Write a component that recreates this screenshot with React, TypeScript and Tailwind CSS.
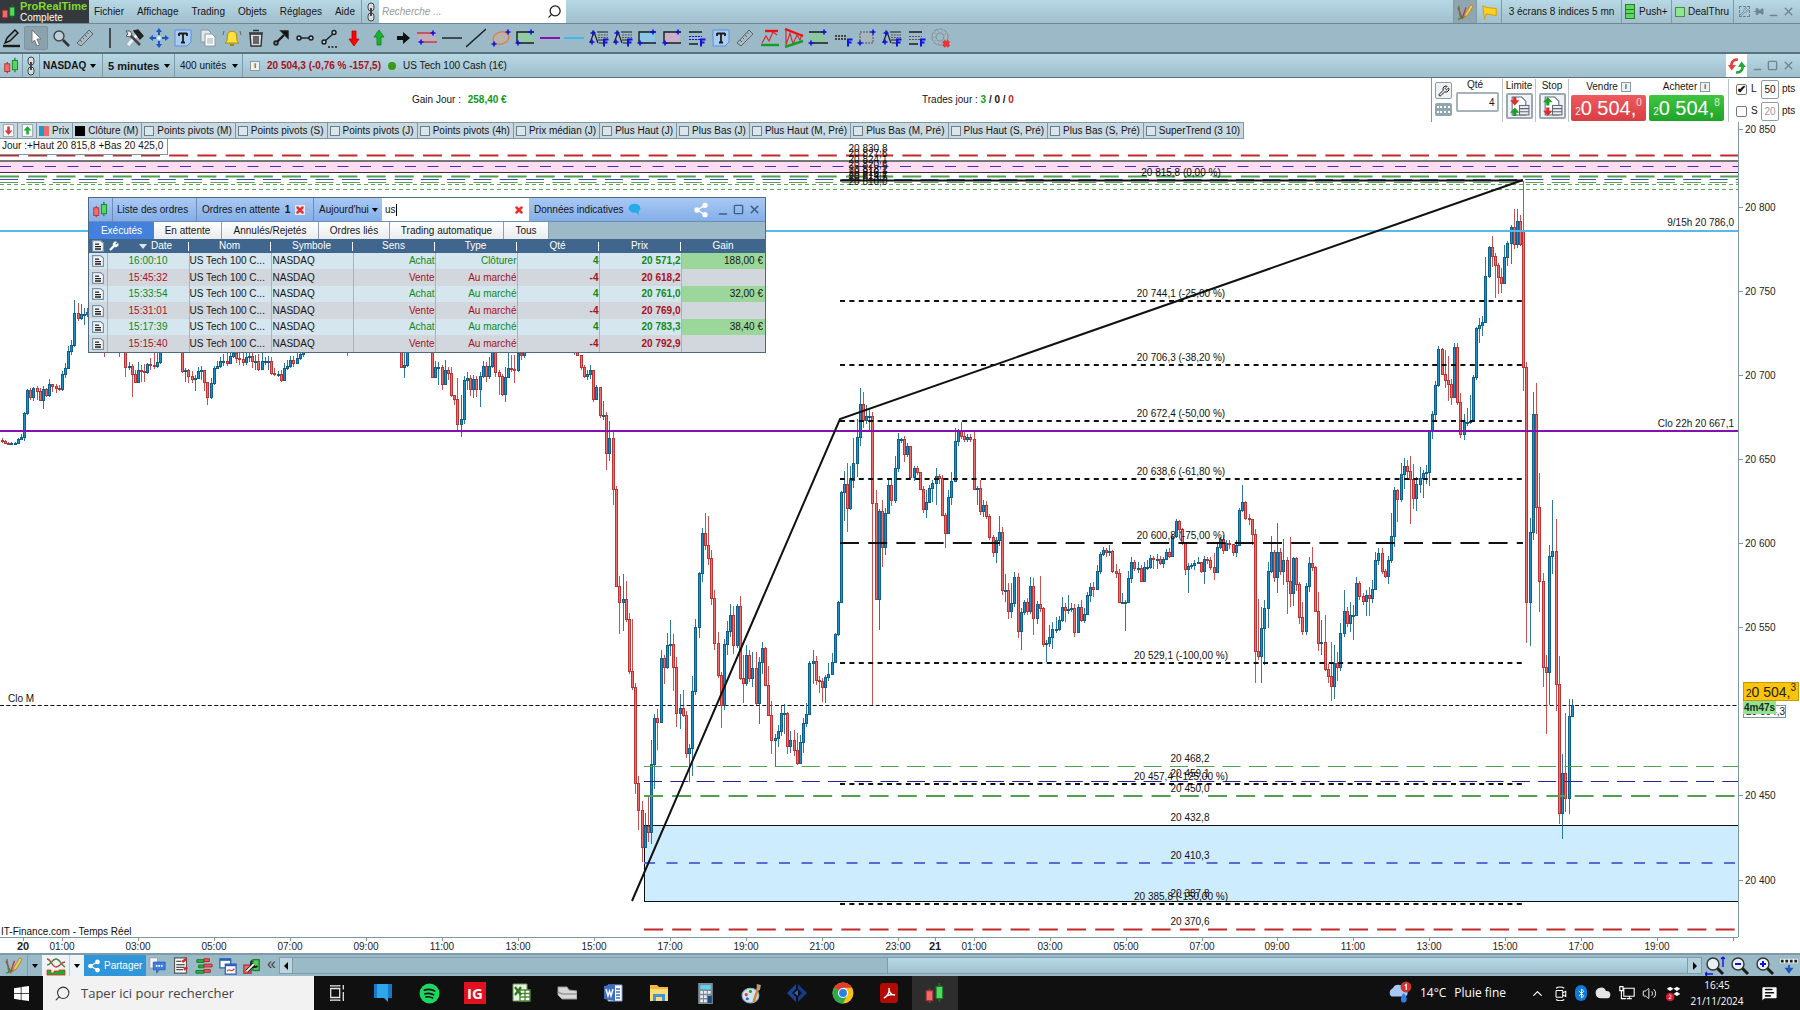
import React from "react";
import { Search, Share2, X, Minus, Square, ChevronUp, Bluetooth, Volume2, Cloud, MessageSquareText, Wrench, Pin } from "lucide-react";

/* ---------- price data: "close high low" per 5-minute bar, in chart units ---------- */

type Segment = { from: number; to: number; open: number; bars: string };

const SEGMENTS: Segment[] = [
  {
    from: 2, to: 87, open: 440,
    bars: "441 438 443;443 440 443;444 442 445;443 442 444;443 442 444;439 438 443;437 434 440;413 412 441;390 389 415;397 388 400;388 387 401;391 386 400;400 388 401;389 386 409;395 388 397;384 379 397;386 384 392;388 384 393;389 385 391;374 371 391;368 363 378;351 346 369;345 340 355;313 300 347;318 303 321;314 304 320;314 308 325;312 308 317",
  },
  {
    from: 91, to: 163, open: 312,
    bars: "322 315 326;325 318 330;330 320 335;335 325 340;345 330 357;344 335 348;338 330 345;340 335 345;345 335 350;350 340 357;346 340 350;367 340 377;366 362 370;374 364 397;382 370 383;370 362 383;371 365 382;372 364 382;364 363 374;365 358 370;366 352 369;362 350 368;350 345 364;340 335 350",
  },
  {
    from: 182, to: 303, open: 345,
    bars: "371 340 373;370 368 382;376 369 383;379 371 383;378 375 391;371 367 379;370 366 380;382 370 391;397 382 405;383 378 399;368 366 385;366 361 368;361 357 368;361 354 366;363 352 366;356 350 364;353 345 358;358 345 363;359 350 365;362 352 366;357 350 365;356 350 362;361 352 368;361 355 370;369 354 371;361 346 370;361 357 365;361 356 370;373 357 375;374 368 376;374 371 377;380 370 382;368 363 380;366 360 370;360 356 368;363 356 367;358 353 364;354 350 360;350 345 357",
  },
  { from: 347, to: 350, open: 340, bars: "342 330 356;335 330 345" },
  { from: 401, to: 407, open: 340, bars: "367 340 368;365 350 378;340 335 367" },
  {
    from: 432, to: 524, open: 335,
    bars: "377 335 378;367 361 377;367 362 385;384 365 390;370 360 385;373 367 380;395 367 397;399 395 405;424 378 430;419 395 437;380 376 424;378 372 390;389 375 396;379 375 398;389 376 397;376 372 407;366 361 378;376 362 382;366 357 379;352 345 368;372 345 377;376 370 395;394 374 396;377 367 402;368 350 378;369 355 372;370 355 383;353 345 372;355 350 360;347 340 358",
  },
  {
    from: 571, to: 609, open: 345,
    bars: "350 345 352;352 350 355;355 348 356;367 355 370;376 365 378;374 370 380;370 365 379;399 370 402;387 385 399;415 387 418;415 401 420;453 412 470;438 421 461",
  },
  {
    from: 613, to: 841, open: 438,
    bars: "489 432 505;586 486 587;602 576 634;599 574 631;619 581 622;671 613 674;687 619 690;783 683 794;810 776 830;847 801 862;826 813 847;832 795 842;764 740 844;718 714 789;722 709 750;658 650 723;667 655 684;645 633 669;644 620 656;667 634 691;713 657 727;708 694 729;715 690 717;753 711 758;748 744 782;691 676 776;627 619 695;573 572 638;533 528 582;545 513 550;558 516 565;598 550 605;643 590 650;675 632 678;705 672 728;644 639 710;631 621 655;615 604 637;645 606 654;606 604 648;678 596 680;683 655 703;655 645 686;678 650 682;668 652 687;703 652 705;662 657 724;648 642 674;685 647 686;715 666 716;740 701 754;738 734 767;731 725 747;713 706 736;713 704 734;746 712 754;740 731 753;750 730 756;763 733 765;742 735 762;723 718 753;714 703 727;663 661 715;661 650 684;680 656 685;681 676 693;687 678 702;677 675 703;674 663 681;662 653 675;634 633 662;602 601 636;492 491 602",
  },
  {
    from: 844, to: 1002, open: 492,
    bars: "484 471 521;508 463 532;480 466 510;463 438 488;437 419 477;404 388 446;420 392 428;416 405 424;416 410 430;503 412 705;599 490 600;511 509 630;547 500 567;513 508 555;485 478 513;500 478 506;468 456 503;439 433 472;439 438 443;454 436 462;446 443 457;477 446 478;468 466 481;472 466 475;489 472 490;509 486 513;502 490 518;488 485 503;483 480 502;476 468 505;478 474 484;515 475 516;533 513 548;497 490 533;481 472 505;441 428 482;431 429 446;436 422 439;439 430 442;437 434 442;439 434 442;489 430 490;488 486 505;511 480 515;505 500 517;516 501 519;537 514 540;552 535 557;540 537 563;532 516 546;590 527 595",
  },
  {
    from: 1005, to: 1185, open: 590,
    bars: "590 574 602;611 583 619;603 583 618;577 572 607;631 573 638;612 608 650;602 600 615;611 598 615;586 577 614;618 578 635;604 601 624;608 576 612;644 607 647;643 640 662;637 625 647;629 622 649;629 617 633;620 616 631;607 597 622;610 603 622;609 595 614;608 603 612;632 604 637;607 604 632;620 600 622;614 608 623;595 592 615;587 583 602;589 582 597;571 565 590;554 552 574;550 547 556;552 548 557;551 545 556;571 550 573;573 564 578;602 569 603;602 593 603;602 600 631;578 571 603;562 557 583;568 560 571;568 562 573;581 565 582;567 562 581;567 560 570;558 555 569;559 556 569;559 554 569;563 556 565;559 557 568;552 549 560;556 548 558;536 534 557;521 519 538;529 520 533;543 528 545;569 542 575",
  },
  {
    from: 1188, to: 1255, open: 569,
    bars: "566 563 593;565 563 569;563 560 570;562 557 564;571 562 573;559 556 584;560 557 564;567 557 570;572 553 580;547 544 573;539 537 549;550 535 554;543 540 550;544 540 549;552 545 556;545 540 557;510 508 546;502 485 512;518 501 520;519 514 525;534 519 545;651 529 683",
  },
  {
    from: 1258, to: 1426, open: 651,
    bars: "656 599 660;628 607 683;608 600 665;571 562 628;552 536 573;577 550 582;552 523 593;571 548 575;560 539 585;581 557 614;593 537 607;558 557 606;584 557 591;617 582 624;631 602 635;586 583 635;563 557 592;567 547 571;611 566 612;643 592 651;642 620 655;669 615 671;676 664 683;686 642 701;663 645 699;667 652 681;633 623 671;611 590 637;623 607 627;615 602 632;615 605 640;583 577 616;596 581 600;601 593 605;595 590 616;598 587 616;589 580 603;560 552 590;553 548 565;571 548 574;576 569 578;560 556 584;536 513 563;490 487 547;499 489 522;474 463 502;466 458 489;471 460 480;479 456 524;498 464 509;484 477 511;478 467 493;473 470 498;472 465 484",
  },
  {
    from: 1429, to: 1520, open: 472,
    bars: "430 430 486;414 411 439;385 381 421;349 346 387;374 348 375;380 350 388;384 356 401;397 379 405;347 343 398;402 343 405;434 393 438;422 414 440;422 408 426;421 395 424;377 375 422;328 327 380;325 318 343;322 316 336;276 257 323;247 246 278;256 236 267;265 253 298;277 263 294;283 268 293;257 245 283;243 241 266;227 225 264;244 209 249;221 209 248;244 215 246",
  },
  {
    from: 1523, to: 1572, open: 231,
    bars: "367 181 391;602 362 643;532 518 646;414 392 540;507 383 534;581 473 612;667 573 687;672 655 734;556 545 705;551 500 574;684 519 711;813 656 824;773 754 839;798 713 812;716 699 814;705 699 717",
  },
];

type Candle = { x: number; open: number; close: number; high: number; low: number };

const CANDLES: Candle[] = SEGMENTS.flatMap((s) => {
  const rows = s.bars.split(";").map((r) => r.split(" ").map(Number));
  let open = s.open;
  return rows.map(([close, high, low], i) => {
    const x = Math.round(s.from + ((s.to - s.from) * i) / (rows.length - 1)) + 0.5;
    const c = { x, open, close, high, low };
    open = close;
    return c;
  });
});

function Candles() {
  return (
    <g shapeRendering="crispEdges">
      {CANDLES.map((c, i) => {
        const up = c.close <= c.open;
        const edge = up ? "#0d608b" : "#bd3434";
        const top = Math.min(c.open, c.close);
        return (
          <g key={i}>
            <path d={`M${c.x} ${c.high}V${c.low}`} stroke={edge} strokeOpacity="0.85" />
            <rect x={c.x - 1} y={top + 0.5} width="2" height={Math.max(1, Math.abs(c.close - c.open))} fill={up ? "#1d8fc6" : "#ee6e6e"} stroke={edge} />
          </g>
        );
      })}
    </g>
  );
}

/* ---------- chart ---------- */

const FIB: [number, string, boolean?][] = [
  [301, "20 744,1 (-25,00 %)"],
  [365, "20 706,3 (-38,20 %)"],
  [421, "20 672,4 (-50,00 %)"],
  [479, "20 638,6 (-61,80 %)"],
  [543, "20 600,8 (-75,00 %)", true],
  [663, "20 529,1 (-100,00 %)"],
  [784, "20 457,4 (-125,00 %)"],
  [904, "20 385,8 (-150,00 %)"],
];

const TOP_LABELS: [number, string][] = [
  [152, "20 830,8"], [157, "20 827,6"], [163, "20 824,1"], [168, "20 820,6"], [173, "20 818,2"], [176, "20 816,1"], [179, "20 814,7"], [181, "20 813,5"], [185, "20 810,0"],
];

const LOW_LABELS: [number, string][] = [
  [762, "20 468,2"], [777, "20 459,1"], [792, "20 450,0"], [821, "20 432,8"], [859, "20 410,3"], [897, "20 387,8"], [925, "20 370,6"],
];

function Rule({ y, from = 0, color, w = 1, dash }: { y: number; from?: number; color: string; w?: number; dash?: string }) {
  return <line x1={from} x2="100%" y1={y} y2={y} stroke={color} strokeWidth={w} strokeDasharray={dash} />;
}

function PriceChart() {
  return (
    <svg className="block h-full w-full" role="img" aria-label="NASDAQ 5 minutes">
      <g transform="translate(0,-139)" fontSize="10" fill="#111">
        <rect x="0" y="161" width="100%" height="12" fill="#ffdcf1" />
        <Rule y={155.5} color="#c22a2a" w={2} dash="19 9.2" />
        <Rule y={161} color="#777" w={2} />
        <Rule y={166.5} color="#3930b8" dash="11 11.5" />
        <Rule y={172.5} color="#333" />
        <Rule y={176.5} color="#4fa04f" w={2} dash="19 9.2" />
        <Rule y={179.5} color="#3a48b8" dash="18 8.3" />
        <Rule y={182.5} color="#5aa55a" dash="18 8.3" />
        <Rule y={184.5} color="#5aa55a" dash="4 3" />
        <Rule y={189.5} color="#5aa55a" dash="4 3" />

        <rect x="644.5" y="825.5" width="100%" height="76" fill="#cdecfe" stroke="#111" />
        <Rule y={863} from={644} color="#5b6bd2" w={2} dash="11 11.5" />
        <Rule y={705.5} color="#111" dash="4 2.3" />
        <Rule y={929.5} from={644} color="#c22a2a" w={2} dash="19 9.2" />

        <Candles />

        <Rule y={231} color="#57b9ea" w={2} />
        <Rule y={431} color="#8410b4" w={2} />
        <Rule y={766.5} from={644} color="#4fa04f" dash="18 8.3" />
        <Rule y={781.5} from={644} color="#23239c" dash="18 8.3" />
        <Rule y={796} from={644} color="#4fa04f" w={2} dash="19 9.2" />

        {FIB.map(([y, label, long]) => (
          <g key={label}>
            <line x1="840" x2="1523" y1={y} y2={y} stroke="#111" strokeWidth="2" strokeDasharray={long ? "19 9.2" : "5 4.4"} />
            <text x="1181" y={y - 4} textAnchor="middle">{label}</text>
          </g>
        ))}
        <path d="M840 180.5H1523" stroke="#111" strokeWidth="2" />
        <path d="M632 901L840 419L1523 180" fill="none" stroke="#111" strokeWidth="2" />
        <text x="1181" y="176" textAnchor="middle">20 815,8 (0,00 %)</text>
        {TOP_LABELS.map(([y, t]) => <text key={t} x="868" y={y} textAnchor="middle">{t}</text>)}
        {LOW_LABELS.map(([y, t]) => <text key={t} x="1190" y={y} textAnchor="middle">{t}</text>)}
        <text x="8" y="702">Clo M</text>
        <text x="1" y="935">IT-Finance.com - Temps Réel</text>
      </g>
    </svg>
  );
}

const PRICE_TICKS: [number, string][] = [
  [7, "20 850"], [85, "20 800"], [169, "20 750"], [253, "20 700"], [337, "20 650"], [421, "20 600"], [505, "20 550"], [673, "20 450"], [758, "20 400"],
];

const TIME_TICKS: [number, string, boolean?][] = [
  [23, "20", true], [62, "01:00"], [138, "03:00"], [214, "05:00"], [290, "07:00"], [366, "09:00"], [442, "11:00"], [518, "13:00"], [594, "15:00"], [670, "17:00"], [746, "19:00"], [822, "21:00"], [898, "23:00"], [935, "21", true], [974, "01:00"], [1050, "03:00"], [1126, "05:00"], [1202, "07:00"], [1277, "09:00"], [1353, "11:00"], [1429, "13:00"], [1505, "15:00"], [1581, "17:00"], [1657, "19:00"], [1733, ""],
];

function PriceAxis() {
  return (
    <aside className="relative w-[62px] shrink-0 border-l border-[#7e98a3] bg-white">
      <svg className="block h-full w-full" aria-label="Prix">
        {PRICE_TICKS.map(([y, t]) => (
          <g key={t}>
            <path d={`M0 ${y + 0.5}h4`} stroke="#7e98a3" />
            <text x="6" y={y + 4} fontSize="10" fill="#222">{t}</text>
          </g>
        ))}
      </svg>
      <div className="absolute top-[583px] left-1 h-[13px] w-[43px] border border-[#7e98a3] bg-white text-right leading-3">20 504,3</div>
      <div className="absolute top-[579px] left-1 h-[13px] w-[33px] bg-[#95e295] text-center leading-[13px] font-bold text-[#163016]">4m47s</div>
      <div className="absolute top-[560px] left-1 flex h-[19px] w-14 items-center justify-center border border-[#c79a00] bg-[#fcc50c] text-[14px] leading-none text-[#222]">
        <span className="self-end pb-px text-[10px]">2</span>0 504,<span className="self-start text-[10px]">3</span>
      </div>
    </aside>
  );
}

/* ---------- icons ---------- */

function Ic({ children, size = 20 }: { children: React.ReactNode; size?: number }) {
  return (
    <svg width={size} height={size} viewBox="0 0 20 20" fill="none" stroke="#1c1c1c" strokeWidth="1.4" aria-hidden="true" className="shrink-0">
      {children}
    </svg>
  );
}

const CandleIcon = ({ size = 18 }: { size?: number }) => (
  <Ic size={size}>
    <path d="M5 6v13" stroke="#a33" /><rect x="2" y="8" width="6" height="9" fill="#f26a6a" stroke="#a33" strokeWidth="1" />
    <path d="M14 1v17" stroke="#187a25" /><rect x="11" y="4" width="6" height="11" fill="#52d95f" stroke="#187a25" strokeWidth="1" />
  </Ic>
);

const PencilZig = ({ size = 20 }: { size?: number }) => (
  <Ic size={size}>
    <path d="M2 5l5 12 4-12" stroke="#c33" /><path d="M3 3l2 14M2 18c4-1 8-1 11-6" stroke="#484" />
    <path d="M9 16l1.500-4 6-10 2.500 1.500-6 10z" fill="#f8cf52" stroke="#a07a20" strokeWidth="0.8" />
  </Ic>
);

const plus = (x: number, y: number) => <path d={`M${x - 2.5} ${y}h5M${x} ${y - 2.5}v5`} stroke="#1111e0" strokeWidth="1.6" />;
const fMark = <path d="M15 18.500v-7h4.500M15 14.500h3.500" stroke="#1111e0" strokeWidth="2" />;

const RulerIcon = (
  <Ic><path d="M2 15L14 2l4 4L6 18z" fill="#a9bac2" stroke="#55646c" strokeWidth="1" /><path d="M5 12l2 2M7.500 9.500l1.500 1.500M10 7l2 2M12 4.500l1.500 1.500" stroke="#55646c" strokeWidth="1" /></Ic>
);
const TextIcon = (
  <Ic><path d="M2 2h16v12l-4 4H2z" fill="#a9cdf0" stroke="#5b8fe0" strokeWidth="1" /><path d="M6 5.500h8M10 6v9M8 14.500h4M6 5v3M14 5v3" strokeWidth="1.800" /></Ic>
);
const AnalysisF = (
  <Ic><path d="M1 15L5 4l4 11M8 4h11M10 15h4M9 12h8" strokeWidth="1.200" /><path d="M9 7h10M9 9.500h10" stroke="#555" strokeWidth="1.200" strokeDasharray="2 0.800" />{plus(4, 5)}{plus(3, 14)}{fMark}</Ic>
);
const linesF = (mid: string) => (
  <Ic><path d="M3 4h13M3 16h9" /><path d="M3 8.500h13M3 11.500h11" stroke={mid} strokeDasharray="2 1" strokeWidth="1.200" />{fMark}</Ic>
);
const boxIcon = (fill: string, side: boolean) => (
  <Ic><path d="M2 4h16v11H2z" fill={fill} stroke="none" /><path d={side ? "M2 15V4h17M2 15h17" : "M1 4h17M3 15h17"} />{plus(16, 4)}{plus(3, 15)}</Ic>
);

const TOOLS: { name: string; icon: React.ReactNode; active?: boolean }[] = [
  { name: "Dessiner", icon: <Ic><path d="M3 15l2-5 8-8 3 3-8 8z" fill="#8fa6b0" stroke="#111" /><path d="M1 18h17" strokeWidth="2.4" /></Ic> },
  { name: "Curseur", active: true, icon: <Ic><path d="M6 2l9 9H11l2.500 6-2.500 1-2.500-6L6 15z" fill="#fff" stroke="#777" strokeWidth="1" /></Ic> },
  { name: "Zoom", icon: <Ic><circle cx="8" cy="8" r="5" fill="#bcd0d9" stroke="#444" /><path d="M12 12l6 6" strokeWidth="2.600" stroke="#333" /></Ic> },
  { name: "Mesure", icon: RulerIcon },
  { name: "Séparateur", icon: <Ic><path d="M10 0v20" /></Ic> },
  { name: "Outils", icon: <Ic><path d="M4 17L13 7" stroke="#eef2f4" strokeWidth="3" /><path d="M6 7l10 10" stroke="#444" strokeWidth="2.600" /><path d="M10 3l4-1 5 6-3 3z" fill="#222" stroke="#222" /><path d="M2 3l4 0 2 3-2 3-4-1 2-2z" fill="#eee" stroke="#555" strokeWidth="1" /></Ic> },
  { name: "Déplacer", icon: <Ic><path d="M10 3v14M3 10h14" stroke="#1b57c4" strokeWidth="2" strokeDasharray="4 1" /><path d="M10 0l3 4H7zM10 20l3-4H7zM0 10l4-3v6zM20 10l-4-3v6z" fill="#1b57c4" stroke="none" /><circle cx="10" cy="10" r="2" fill="#dff" stroke="none" /></Ic> },
  { name: "Texte", icon: TextIcon },
  { name: "Copier", icon: <Ic><path d="M3 2h7l3 3v9H3z" fill="#dfe7ea" stroke="#8b989e" strokeWidth="1" /><path d="M7 6h7l3 3v9H7z" fill="#fff" stroke="#8b989e" strokeWidth="1" /><path d="M9 11h6M9 13h6M9 15h6" stroke="#9aa" strokeWidth="1" /></Ic> },
  { name: "Alerte", icon: <Ic><path d="M3 15c3-2 2-5 2.500-8 .5-5 8.500-5 9 0 .5 3-.5 6 2.500 8z" fill="#ffe13a" stroke="#a88a00" strokeWidth="1" /><path d="M8 17h4" stroke="#a88a00" strokeWidth="2" /><path d="M2 3L1 7M18 3l1 4" stroke="#666" strokeWidth="1" /></Ic> },
  { name: "Supprimer", icon: <Ic><path d="M4 6h12l-1 12H5z" fill="#d7dde0" stroke="#333" /><path d="M3 5h14M7 2.500h6M8 8v8M10 8v8M12 8v8" stroke="#333" /></Ic> },
  { name: "Flèche", icon: <Ic><path d="M5 15l8-8" strokeWidth="2.400" /><path d="M10 3h7v7z" fill="#111" /><circle cx="5" cy="15" r="2" fill="#777" /></Ic> },
  { name: "Segment", icon: <Ic><path d="M5 10h10" /><circle cx="4" cy="10" r="2" fill="#b7cbd4" /><circle cx="16" cy="10" r="2" fill="#b7cbd4" /></Ic> },
  { name: "Segment prolongé", icon: <Ic><path d="M5 13l9-8" /><circle cx="4" cy="14" r="2" fill="#b7cbd4" /><circle cx="14" cy="4.500" r="2" fill="#b7cbd4" /><path d="M8 19h10" strokeDasharray="2 1.500" /></Ic> },
  { name: "Baisse", icon: <Ic><path d="M8 3h4v8h3l-5 7-5-7h3z" fill="#f00" stroke="#b00" strokeWidth="0.800" /></Ic> },
  { name: "Hausse", icon: <Ic><path d="M8 17h4V9h3l-5-7-5 7h3z" fill="#1db32a" stroke="#0c7d18" strokeWidth="0.800" /></Ic> },
  { name: "Droite", icon: <Ic><path d="M4 8h6V4l7 6-7 6v-4H4z" fill="#111" stroke="none" /></Ic> },
  { name: "Canal", icon: <Ic><path d="M1 5h17v9H1z" fill="#c3aebb" stroke="none" /><path d="M0 5h17M3 14h17" stroke="#c8383f" />{plus(16, 5)}{plus(4, 14)}</Ic> },
  { name: "Ligne horizontale", icon: <Ic><path d="M0 10h20" /></Ic> },
  { name: "Droite oblique", icon: <Ic><path d="M0 19L20 1" /></Ic> },
  { name: "Ellipse", icon: <Ic><ellipse cx="10" cy="10" rx="8" ry="6" stroke="#e07f4e" fill="#b9b3ac" transform="rotate(-20 10 10)" />{plus(17, 4)}{plus(3, 16)}</Ic> },
  { name: "Rectangle", icon: boxIcon("#92c9a6", true) },
  { name: "Ligne violette", icon: <Ic><path d="M0 10h20" stroke="#8410b4" strokeWidth="2" /></Ic> },
  { name: "Ligne bleue", icon: <Ic><path d="M0 10h20" stroke="#45b4ee" strokeWidth="2" /></Ic> },
  { name: "Analyse 1", icon: AnalysisF },
  { name: "Analyse 2", icon: AnalysisF },
  { name: "Zone bleue", icon: boxIcon("#8ec6e8", true) },
  { name: "Zone rose", icon: boxIcon("#cbb0cc", true) },
  { name: "Retracement", icon: linesF("#1111e0") },
  { name: "Note", icon: TextIcon },
  { name: "Règle", icon: RulerIcon },
  { name: "Zigzag", icon: <Ic><path d="M2 15l4-7 3 5 4-9 4 3" stroke="#c33" strokeWidth="1.200" /><path d="M5 3h13" stroke="#e11" strokeWidth="2.400" /><path d="M1 17h18" stroke="#13a022" strokeWidth="2.400" /></Ic> },
  { name: "Triangle", icon: <Ic><path d="M2 2v15l4-12 3 11 4-9 3 5 2-6" stroke="#c33" strokeWidth="1.200" /><path d="M1 1l18 7" stroke="#e11" strokeWidth="2.400" /><path d="M1 19l18-6" stroke="#13a022" strokeWidth="2.400" /></Ic> },
  { name: "Canal vert", icon: boxIcon("#8cc7a4", false) },
  { name: "Pointillés", icon: <Ic><path d="M2 8h12M2 11h12" strokeDasharray="2 1" strokeWidth="2" stroke="#444" />{fMark}</Ic> },
  { name: "Zone grise", icon: <Ic><rect x="3" y="4" width="13" height="11" fill="#a5b6be" stroke="#555" strokeDasharray="2 1" strokeWidth="1" />{plus(16, 4)}{plus(3, 15)}</Ic> },
  { name: "Analyse 3", icon: AnalysisF },
  { name: "Niveaux", icon: linesF("#555") },
  { name: "Aimant", icon: <Ic><circle cx="9" cy="9" r="6" stroke="#7c8d95" strokeWidth="5" strokeDasharray="3 0.800" /><circle cx="9" cy="9" r="6" stroke="#a9bbc3" strokeWidth="3" strokeDasharray="2.800 1" /><path d="M12.500 13l5.500 5.500M18 13l-5.500 5.500" stroke="#e33" strokeWidth="3.500" /></Ic> },
];

const Caret = () => <span className="inline-block border-x-[3px] border-t-4 border-x-transparent border-t-black" />;

const LinkIcon = () => (
  <svg width="12" height="20" viewBox="0 0 12 20" fill="none" stroke="#444" aria-hidden="true">
    <rect x="3" y="1" width="6" height="8" rx="3" fill="#d5dde0" /><rect x="3" y="11" width="6" height="8" rx="3" fill="#d5dde0" /><path d="M6 6v8" strokeWidth="2" />
  </svg>
);

const Info = () => <span className="flex size-[10px] items-center justify-center border border-[#8a9aa2] bg-[#eef2f4] text-[8px] leading-none font-bold text-[#555]">i</span>;

const RedCross = () => (
  <span className="flex size-[10px] items-center justify-center"><X size={10} strokeWidth={6} color="#e8322e" /></span>
);

/* ---------- bars ---------- */

function MenuBar() {
  return (
    <header className="flex h-6 shrink-0 items-stretch border-b border-[#6e8792] bg-linear-to-b from-[#b7d8e5] to-[#a1bfcc]">
      <div className="flex w-[89px] items-center gap-[3px] bg-[#33393c] pl-px">
        <CandleIcon size={16} />
        <div className="leading-[11px] whitespace-nowrap">
          <div className="text-[11px] font-bold text-[#7fdc2f]">ProRealTime</div>
          <div className="text-white">Complete</div>
        </div>
      </div>
      <nav className="flex w-[272px] items-center justify-between pr-[6px] pl-[5px]">
        {["Fichier", "Affichage", "Trading", "Objets", "Réglages", "Aide"].map((m) => <button key={m} type="button">{m}</button>)}
      </nav>
      <div className="flex w-[18px] items-center justify-center border-l border-[#7f9ba8]"><LinkIcon /></div>
      <label className="flex w-[187px] items-center bg-white pr-1 pl-[3px]">
        <input type="search" aria-label="Recherche" placeholder="Recherche ..." className="min-w-0 flex-1 italic outline-none placeholder:text-[#9a9a9a]" />
        <Search size={15} className="-scale-x-100" />
      </label>
      <div className="flex-1" />
      <button type="button" aria-label="Dessins" className="flex w-6 items-center justify-center border-x border-[#7f9ba8] bg-[#8fa6b1]"><PencilZig size={18} /></button>
      <button type="button" aria-label="Drapeau" className="flex w-6 items-center justify-center"><Ic size={18}><path d="M3 3l4 2 11 1v8l-11-2-2 6z" fill="#ffd11f" stroke="#d69a00" strokeWidth="1" /></Ic></button>
      <button type="button" className="w-[120px] border-l border-[#7f9ba8] text-center">3 écrans 8 indices 5 mn</button>
      <button type="button" className="flex w-[50px] items-center gap-1 border-l border-[#7f9ba8] pl-[3px]">
        <span className="flex h-[15px] w-[10px] flex-col divide-y divide-[#2c7a32] border border-[#2c7a32] bg-[#5ad860]"><i className="flex-1" /><i className="flex-1" /><i className="flex-1" /></span>Push+
      </button>
      <button type="button" className="flex w-[62px] items-center gap-[3px] border-l border-[#7f9ba8] pl-[3px]"><span className="size-[10px] border border-[#4a8a50] bg-[#8fe890]" />DealThru</button>
      <div className="flex w-[67px] items-center justify-between border-l border-[#7f9ba8] px-[5px] text-[#70848e]">
        <span className="border border-dashed border-[#70848e]"><Wrench size={9} /></span><Pin size={11} className="rotate-90" fill="#70848e" /><Minus size={11} strokeWidth={3} className="mt-2" /><X size={13} strokeWidth={2.5} />
      </div>
    </header>
  );
}

function DrawingBar() {
  return (
    <div className="flex h-[30px] shrink-0 items-center border-b-2 border-[#5c737d] bg-[#9bb9c6]">
      <div className="flex w-[953px] items-center justify-between">
        {TOOLS.map((t) => (
          <button key={t.name} type="button" aria-label={t.name} className={t.active ? "flex h-6 w-6 items-center justify-center rounded-xs border border-[#7e939d] bg-[#8aa2ad]" : "flex h-6 w-6 items-center justify-center"}>
            {t.icon}
          </button>
        ))}
      </div>
    </div>
  );
}

function InstrumentBar() {
  return (
    <div className="flex h-6 shrink-0 items-stretch border-b border-[#5c737d] bg-linear-to-b from-[#b7d8e5] to-[#a1bfcc]">
      <span className="flex w-[22px] items-center justify-center"><CandleIcon size={17} /></span>
      <span className="flex w-[18px] items-center justify-center border-x border-[#7f9ba8]"><LinkIcon /></span>
      <button type="button" className="flex w-[63px] items-center justify-between border-r border-[#7f9ba8] pr-[6px] pl-[3px] font-bold">NASDAQ<Caret /></button>
      <button type="button" className="flex w-[72px] items-center justify-between border-r border-[#7f9ba8] pr-[4px] pl-[5px] text-[11px] font-bold">5 minutes<Caret /></button>
      <button type="button" className="flex w-[68px] items-center justify-between border-r border-[#7f9ba8] pr-[4px] pl-[5px]">400 unités<Caret /></button>
      <div className="flex items-center gap-[7px] pl-[7px]">
        <Info />
        <span className="font-bold text-[#a80f1b]">20 504,3 (-0,76 % -157,5)</span>
        <span className="size-2 rounded-full bg-[#3a9a12]" />
        <span>US Tech 100 Cash (1€)</span>
      </div>
      <div className="flex-1" />
      <span className="flex w-[21px] items-center justify-center bg-white">
        <Ic size={18}><path d="M11 3C6 2 3 6 4 11" stroke="#e0443f" strokeWidth="3" /><path d="M0 9h9l-5 6z" fill="#e0443f" stroke="none" /><path d="M9 17c5 1 8-3 7-8" stroke="#22a83a" strokeWidth="3" /><path d="M11 11h9l-5-6z" fill="#22a83a" stroke="none" /></Ic>
      </span>
      <div className="flex w-[53px] items-center justify-between px-[5px] text-[#70848e]">
        <Minus size={11} strokeWidth={3} className="mt-2" /><Square size={11} strokeWidth={3} /><X size={13} strokeWidth={2.5} />
      </div>
    </div>
  );
}

function QuoteButton({ label, tone, last }: { label: string; tone: "sell" | "buy"; last: string }) {
  return (
    <div className="flex w-[75px] flex-col items-stretch">
      <div className="flex h-4 items-center justify-center gap-[3px]">{label}<Info /></div>
      <button type="button" aria-label={label} className={tone === "sell" ? "flex h-[26px] items-center justify-center rounded-xs bg-linear-to-b from-[#ee5a5e] to-[#d93d43] text-[20px] leading-none text-white" : "flex h-[26px] items-center justify-center rounded-xs bg-linear-to-b from-[#3fc43f] to-[#1fa42a] text-[20px] leading-none text-white"}>
        <span className="self-end pb-1 text-[10px] opacity-90">2</span>0 504,<span className="self-start pt-[3px] text-[10px] opacity-80">{last}</span>
      </button>
    </div>
  );
}

const DOWN = "M4 0h3v3h3L5.500 8 1 3h3z";
const UP = "M4 8h3V5h3L5.500 0 1 5h3z";

function OrderType({ label, stop }: { label: string; stop?: boolean }) {
  return (
    <div className="flex w-[33px] flex-col items-center border-l border-[#b9c4ca]">
      <span className="h-[14px] leading-[13px]">{label}</span>
      <button type="button" aria-label={label} className="flex h-[26px] w-[27px] items-center justify-center rounded-xs border-2 border-[#9aa8b0] bg-[#f1f4f6]">
        <Ic size={21}>
          <path d="M3 1h9l4 4v13H3z" fill="#fff" stroke="#667" strokeWidth="1" />
          <path d={stop ? UP : DOWN} fill={stop ? "#16a02a" : "#e02c2c"} stroke="none" transform="translate(0,1)" />
          <path d={stop ? DOWN : UP} fill={stop ? "#e02c2c" : "#16a02a"} stroke="none" transform="translate(0,11)" />
          <rect x="10" y="9" width="9" height="9" fill="#e8edf0" stroke="#667" strokeWidth="1" /><path d="M10 12h9M10 15h9" stroke="#667" strokeWidth="1" />
        </Ic>
      </button>
    </div>
  );
}

function LevelRow({ label, value, on }: { label: string; value: string; on?: boolean }) {
  return (
    <div className="flex h-[20px] items-center">
      <label className="flex w-[25px] items-center gap-1">
        <input type="checkbox" defaultChecked={on} className="peer sr-only" />
        <span className="flex size-[11px] items-center justify-center rounded-xs border border-[#777] bg-white text-[11px] leading-none font-bold">{on ? "✔" : ""}</span>
        {label}
      </label>
      <input aria-label={`Points ${label}`} defaultValue={value} className={on ? "h-[19px] w-[18px] rounded-xs border border-[#8f9ba2] text-center outline-none" : "h-[19px] w-[18px] rounded-xs border border-[#8f9ba2] text-center text-[#9b9b9b] outline-none"} />
      <span className="pl-[3px]">pts</span>
    </div>
  );
}

function TradingPanel() {
  return (
    <section className="flex h-11 shrink-0 bg-white">
      <div className="flex flex-1 items-center">
        <div className="w-[510px] pl-[412px] whitespace-nowrap">Gain Jour : <b className="pl-1 text-[#109a1c]">258,40 €</b></div>
        <div className="pl-[412px] whitespace-nowrap">Trades jour : <b><span className="text-[#109a1c]">3</span> / 0 / <span className="text-[#c3202a]">0</span></b></div>
      </div>
      <div className="flex w-[369px] shrink-0 border-l border-[#7e98a3] pt-px">
        <div className="flex w-[20px] flex-col items-end gap-1 pt-[3px]">
          <button type="button" aria-label="Réglages" className="flex size-[17px] items-center justify-center rounded-xs border border-[#8f9ba2] bg-[#eef2f4]"><Wrench size={12} /></button>
          <button type="button" aria-label="Clavier" className="flex h-[13px] w-[17px] items-center justify-center rounded-xs bg-[#8fa5b0]"><span className="h-[7px] w-[13px] border-y-2 border-dotted border-white" /></button>
        </div>
        <label className="flex w-[50px] flex-col items-center">
          <span className="h-[13px] pr-1 leading-3">Qté</span>
          <input defaultValue="4" className="h-5 w-[43px] rounded-xs border-2 border-[#a7b2b9] px-[2px] text-right outline-none" />
        </label>
        <OrderType label="Limite" />
        <OrderType label="Stop" stop />
        <div className="flex gap-[3px] border-l border-[#b9c4ca] pl-[2px]">
          <QuoteButton label="Vendre" tone="sell" last="0" />
          <QuoteButton label="Acheter" tone="buy" last="8" />
        </div>
        <div className="ml-1 flex flex-col gap-[2px] border-l border-[#b9c4ca] pl-[7px]">
          <LevelRow label="L" value="50" on />
          <LevelRow label="S" value="20" />
        </div>
      </div>
    </section>
  );
}

const OVERLAYS = ["Points pivots (M)", "Points pivots (S)", "Points pivots (J)", "Points pivots (4h)", "Prix médian (J)", "Plus Haut (J)", "Plus Bas (J)", "Plus Haut (M, Pré)", "Plus Bas (M, Pré)", "Plus Haut (S, Pré)", "Plus Bas (S, Pré)", "SuperTrend (3 10)"];

function Indicators() {
  const cell = "flex h-[17px] items-center gap-[3px] border-y border-r border-[#7f97a2] bg-[#c9d9e1] pr-[3px] pl-[2px] whitespace-nowrap";
  return (
    <div className="flex h-[17px] shrink-0">
      <button type="button" aria-label="Réduire" className="flex h-[17px] w-[18px] items-center justify-center border-y border-r border-[#7f97a2] bg-[#c9d9e1]"><Ic size={13}><rect x="2" y="1" width="16" height="18" fill="#fff" stroke="#99a" /><path d="M8 4h4v6h4l-6 7-6-7h4z" fill="#e23a3a" stroke="none" /></Ic></button>
      <button type="button" aria-label="Agrandir" className="flex h-[17px] w-[19px] items-center justify-center border-y border-r border-[#7f97a2] bg-[#c9d9e1]"><Ic size={13}><rect x="2" y="1" width="16" height="18" fill="#fff" stroke="#99a" /><path d="M8 16h4v-6h4l-6-7-6 7h4z" fill="#1eae35" stroke="none" /></Ic></button>
      <button type="button" className={cell}><span className="size-[10px] border-r-[5px] border-l-[5px] border-r-[#f06a6a] border-l-[#1d9ac6]" />Prix</button>
      <button type="button" className={cell}><span className="size-[10px] bg-black" />Clôture (M)</button>
      {OVERLAYS.map((o) => <button key={o} type="button" className={cell}><span className="size-[10px] border border-[#6f7f88] bg-[#dbe6ec]" />{o}</button>)}
    </div>
  );
}

/* ---------- order list window ---------- */

const ORDERS: [string, boolean, string, string, string][] = [
  ["16:00:10", true, "Clôturer", "20 571,2", "188,00 €"],
  ["15:45:32", false, "Au marché", "20 618,2", ""],
  ["15:33:54", true, "Au marché", "20 761,0", "32,00 €"],
  ["15:31:01", false, "Au marché", "20 769,0", ""],
  ["15:17:39", true, "Au marché", "20 783,3", "38,40 €"],
  ["15:15:40", false, "Au marché", "20 792,9", ""],
];

const TABS: [string, string][] = [
  ["Exécutés", "w-[65px]"], ["En attente", "w-[68px]"], ["Annulés/Rejetés", "w-[97px]"], ["Ordres liés", "w-[71px]"], ["Trading automatique", "w-[114px]"], ["Tous", "w-[45px]"],
];

const DocIcon = ({ size = 12 }: { size?: number }) => (
  <Ic size={size}><path d="M1 1h13l5 4v14H1z" fill="#f4f7fa" stroke="#7a93ac" strokeWidth="2" /><path d="M5 7h7M5 11h10M5 15h10" strokeWidth="2.200" /></Ic>
);

function OrderList() {
  const divider = "border-r border-[#a3b6c0]";
  return (
    <section className="absolute top-[58px] left-[88px] w-[678px] border border-[#4d6a80] bg-[#9bb9c6]">
      <div className="flex h-6 items-stretch border-b border-[#6d8db5] bg-linear-to-b from-[#a9c9f3] to-[#83aee8]">
        <span className="flex w-[24px] items-center justify-center border-r border-[#6d8db5]"><CandleIcon size={17} /></span>
        <span className="flex w-[84px] items-center border-r border-[#6d8db5] pl-1">Liste des ordres</span>
        <span className="flex w-[117px] items-center gap-[5px] border-r border-[#6d8db5] pl-[5px] whitespace-nowrap">Ordres en attente <b>1</b><span className="bg-[#dfe9f6]"><RedCross /></span></span>
        <button type="button" className="flex w-[68px] items-center gap-[3px] pl-[5px] whitespace-nowrap">Aujourd'hui<Caret /></button>
        <label className="relative flex w-[147px] items-center bg-white pr-[5px] pl-[3px]">
          <input aria-label="Filtrer les ordres" defaultValue="us" className="min-w-0 flex-1 outline-none" />
          <span className="absolute left-[14px] h-3 w-px bg-black" />
          <RedCross />
        </label>
        <span className="flex flex-1 items-center gap-1 pl-[5px]">Données indicatives
          <Ic size={13}><ellipse cx="10" cy="8" rx="9" ry="7" fill="#27aaea" stroke="none" /><path d="M11 12l5 7 1-8z" fill="#27aaea" stroke="none" /></Ic>
        </span>
        <span className="flex items-center gap-1 pr-[4px] text-[#3f5f8c]">
          <Share2 size={16} color="#fff" fill="#fff" className="mr-1" /><Minus size={12} strokeWidth={3} className="mt-2" /><Square size={11} strokeWidth={3} /><X size={13} strokeWidth={3} />
        </span>
      </div>
      <div role="tablist" className="flex h-[17px]">
        {TABS.map(([t, w], i) => (
          <button key={t} type="button" role="tab" aria-selected={i === 0} className={`${w} ${i === 0 ? "bg-[#4381dc] text-white" : "border-r border-[#8ba0ac] bg-linear-to-b from-white to-[#e9ebed]"} text-center whitespace-nowrap`}>{t}</button>
        ))}
      </div>
      <table className="w-full table-fixed border-collapse">
        <colgroup>
          <col className="w-[18px]" /><col className="w-[82px]" /><col className="w-[82px]" /><col className="w-[82px]" /><col className="w-[82px]" /><col className="w-[82px]" /><col className="w-[82px]" /><col className="w-[82px]" /><col />
        </colgroup>
        <thead>
          <tr className="h-[14px] bg-[#41668d] text-white">
            <th aria-label="Détail" className="p-0"><div className="flex justify-center"><DocIcon size={12} /></div></th>
            {["Date", "Nom", "Symbole", "Sens", "Type", "Qté", "Prix", "Gain"].map((h, i) => (
              <th key={h} className="p-0 font-normal">
                <div className={i < 7 ? "flex h-[9px] items-center border-r border-white" : "flex h-[9px] items-center"}>
                  {i === 0 && <Wrench size={10} className="absolute ml-[2px]" fill="#fff" />}
                  <span className={i === 0 ? "flex flex-1 items-center justify-center gap-1 pl-4" : "flex-1"}>
                    {i === 0 && <span className="border-x-4 border-t-[5px] border-x-transparent border-t-[#dbe6f0]" />}{h}
                  </span>
                </div>
              </th>
            ))}
          </tr>
        </thead>
        <tbody>
          {ORDERS.map(([time, buy, type, price, gain], i) => {
            const tone = buy ? "text-[#0f8a1c]" : "text-[#a9101c]";
            return (
              <tr key={time} className={`${i % 2 ? "h-[17px]" : "h-4"} ${buy ? "bg-[#d5e6ee]" : "bg-[#d1d7dd]"}`}>
                <td className={`p-0 ${divider}`}><div className="flex justify-center"><DocIcon /></div></td>
                <td className={`p-0 text-center ${divider} ${tone}`}>{time}</td>
                <td className={`p-0 whitespace-nowrap ${divider}`}>US Tech 100 C...</td>
                <td className={`p-0 pl-px ${divider}`}>NASDAQ</td>
                <td className={`p-0 text-right ${divider} ${tone}`}>{buy ? "Achat" : "Vente"}</td>
                <td className={`p-0 text-right ${divider} ${tone}`}>{type}</td>
                <td className={`p-0 text-right font-bold ${divider} ${tone}`}>{buy ? "4" : "-4"}</td>
                <td className={`p-0 text-right font-bold ${divider} ${tone}`}>{price}</td>
                <td className={gain ? "bg-[#9bd79b] p-0 pr-[2px] text-right" : "p-0"}>{gain}</td>
              </tr>
            );
          })}
        </tbody>
      </table>
    </section>
  );
}

/* ---------- bottom bars ---------- */

const Glass = ({ sign }: { sign?: "+" | "-" }) => (
  <Ic size={20}>
    <circle cx="8" cy="8" r="6" fill="#e8f0f4" stroke="#333" /><path d="M12.500 12.500L18 18" strokeWidth="3" />
    {sign ? <path d={sign === "+" ? "M5 8h6M8 5v6" : "M5 8h6"} stroke="#1111d0" strokeWidth="2" /> : <path d="M0 18h8M18 1v10M0 18l2-2M0 18l2 2M18 1l-2 2M18 1l2 2" stroke="#1111e0" />}
  </Ic>
);

function ScrollRow() {
  return (
    <div className="flex h-[23px] shrink-0 items-stretch border-t-2 border-[#7f9ba8] bg-[#9bbac8]">
      <button type="button" aria-label="Dessin" className="flex w-7 items-center justify-center border-r border-[#7f9ba8]"><PencilZig size={19} /></button>
      <button type="button" aria-label="Choisir un dessin" className="flex w-[14px] items-center justify-center"><Caret /></button>
      <button type="button" aria-label="Indicateurs" className="flex w-[27px] items-center justify-center bg-[#eef3f5]"><Ic><path d="M1 3c4 0 5 8 9 8s5-5 9-5" stroke="#c33" /><path d="M1 9c4 0 5-6 9-6s5 6 9 8" stroke="#484" /><path d="M1 19v-5h4v3h3v-2h5v-1h6v5z" fill="#14b32a" stroke="#e22" strokeWidth="0.800" /></Ic></button>
      <button type="button" aria-label="Choisir un indicateur" className="flex w-[15px] items-center justify-center border-l border-[#c2cdd3] bg-[#eef3f5]"><Caret /></button>
      <button type="button" className="flex w-[62px] items-center gap-[3px] bg-[#2f96da] pl-[3px] text-white"><Share2 size={14} fill="#fff" />Partager</button>
      <div className="flex w-[118px] items-center justify-around">
        <Ic size={17}><path d="M1 1h9v12H1z" fill="#f3f6f8" stroke="#99a" strokeWidth="1" /><path d="M5 6h14v9h-7l-3 4v-4H5z" fill="#3f7be0" stroke="#2a5cb8" strokeWidth="1" /><path d="M8 10.500h8" stroke="#fff" strokeDasharray="2 1" strokeWidth="2" /></Ic>
        <Ic size={17}><path d="M3 1h14v18H3z" fill="#fff" stroke="#555" /><path d="M5 5h6M5 9h10M5 12h10M5 15h8" strokeWidth="1.200" /><path d="M12 6l5-4M14 15l4-3" stroke="#e22" strokeWidth="3" /></Ic>
        <Ic size={18}><path d="M2 3h8v3H2zM4 9h6v3H4zM1 15h9v3H1z" fill="#26b83a" stroke="#15701f" strokeWidth="1" /><path d="M10 2h6v3h-6zM10 8h9v3h-9zM10 14h7v3h-7z" fill="#f05a5a" stroke="#a22" strokeWidth="1" /></Ic>
        <Ic size={18}><path d="M1 2h12v10H1z" fill="#fff" stroke="#2b5fb5" /><path d="M1 3h12" stroke="#2b5fb5" strokeWidth="2.500" /><path d="M7 8h12v11H7z" fill="#fff" stroke="#2b5fb5" /><path d="M7 9h12" stroke="#2b5fb5" strokeWidth="2.500" /><path d="M9 16c3-5 4 3 8-3" stroke="#e33" /></Ic>
        <Ic size={18}><rect x="1" y="9" width="8" height="9" fill="#f26a6a" stroke="#a33" /><rect x="11" y="3" width="7" height="12" fill="#4ecb5a" stroke="#187a25" /><path d="M4 16l8-8" strokeWidth="4" /><path d="M10 4a4 4 0 006 6" strokeWidth="2" /><path d="M4 16l8-8" stroke="#fff" strokeWidth="2" /></Ic>
      </div>
      <span className="flex w-[15px] items-center justify-center pb-1 text-[16px] leading-none text-[#444]">«</span>
      <div className="my-[2px] flex flex-1 border border-[#7f9ba8]">
        <button type="button" aria-label="Défiler à gauche" className="flex w-[13px] items-center justify-center border-r border-[#7f9ba8] bg-[#bcd5df]"><span className="border-y-4 border-r-4 border-y-transparent border-r-black" /></button>
        <div className="flex-[594]" />
        <div className="flex-[799] border-x border-[#7f9ba8] bg-linear-to-b from-[#b9dbe8] to-[#9fc0ce]" />
        <button type="button" aria-label="Défiler à droite" className="flex w-[13px] items-center justify-center bg-[#b3cfda]"><span className="border-y-4 border-l-4 border-y-transparent border-l-black" /></button>
      </div>
      <div className="flex w-[98px] items-center justify-around">
        <Glass /><Glass sign="-" /><Glass sign="+" />
        <Ic size={18}><path d="M0 2h20v5H0z" fill="#e7edf0" stroke="none" /><path d="M1 4.500h18" strokeDasharray="3 2" strokeWidth="3" /><path d="M10 9v6M7 13l3 4 3-4z" stroke="#1c55c0" fill="#1c55c0" strokeWidth="2" /></Ic>
      </div>
    </div>
  );
}

const APPS: { name: string; icon: React.ReactNode; active?: boolean }[] = [
  { name: "Vue des tâches", icon: <Ic size={18}><path d="M3 5h10v10H3zM3 1v1h10V1M3 19v-1h10v1M17 9v10M17 1v5" stroke="#e8e8e8" /></Ic> },
  { name: "Bureau", icon: <Ic><path d="M1 1h18v14H1z" fill="#1878c8" stroke="none" /><path d="M4 1h11v18l-4-4H4z" fill="#2ea6ec" stroke="none" /></Ic> },
  { name: "Spotify", icon: <Ic size={21}><circle cx="10" cy="10" r="9.500" fill="#1ed760" stroke="none" /><path d="M4.500 7c4-1.500 8-1 11 1M5 10.500c3-1 7-.7 9.500 1M6 13.500c2.500-.7 5-.5 7.500 1" stroke="#111" strokeWidth="1.600" /></Ic> },
  { name: "IG", icon: <span className="flex h-[22px] w-[22px] items-center justify-center bg-[#e3101f] text-[15px] leading-none font-bold text-white">IG</span> },
  { name: "Excel", icon: <Ic><path d="M2 1h14v17H2z" fill="#e9f3e4" stroke="#6a9a52" strokeWidth="1" /><path d="M9 7h10v11H9z" fill="#fff" stroke="#4d8a34" /><path d="M9 10.500h10M9 14h10M14 7v11" stroke="#4d8a34" /><path d="M4 4l6 8M10 4l-6 8" stroke="#2f7a1f" strokeWidth="2.200" /></Ic> },
  { name: "Scanner", icon: <Ic><path d="M1 4h9l2 3 8 1v8H5l-4-4z" fill="#d8d8d8" stroke="#999" strokeWidth="1" /><path d="M1 9l4 2h15" stroke="#999" /></Ic> },
  { name: "Word", icon: <Ic><path d="M5 2h14v16H5z" fill="#fff" stroke="#7fa0d0" strokeWidth="1" /><path d="M1 3l11-2v17L1 16z" fill="#3d6fc0" stroke="none" /><path d="M3 6l2 7 1.500-5L8 13l2-7" stroke="#fff" /><path d="M13 6h4M13 9h4M13 12h4M13 15h4" stroke="#3d6fc0" /></Ic> },
  { name: "Explorateur", icon: <Ic><path d="M1 2h7l2 2h9v14H1z" fill="#f0b93a" stroke="none" /><path d="M1 6h18v12H1z" fill="#fddb78" stroke="none" /><path d="M4 18v-7h12v7h-3v-4H7v4z" fill="#3f97d8" stroke="none" /></Ic> },
  { name: "Calculatrice", icon: <Ic size={21}><path d="M3 0h14v20H3z" fill="#7d8c96" stroke="none" /><path d="M5 2h10v4H5z" fill="#5fd4f0" stroke="none" /><path d="M5 9h10M5 13h10M5 17h10" stroke="#e8eef2" strokeWidth="2.600" strokeDasharray="2.600 1" /><path d="M12 12h4v7h-4z" fill="#1d4a80" stroke="none" /></Ic> },
  { name: "Paint", icon: <Ic size={21}><ellipse cx="9" cy="12" rx="8" ry="7" fill="#cfe4ee" stroke="#8fb0c0" strokeWidth="1" /><circle cx="5" cy="11" r="1.500" fill="#e33" stroke="none" /><circle cx="9" cy="8" r="1.500" fill="#2a2" stroke="none" /><circle cx="6" cy="15" r="1.500" fill="#36d" stroke="none" /><path d="M12 18l5-15" stroke="#d08a3a" strokeWidth="2.400" /><path d="M15 1l4 1-1 5-3-1z" fill="#b98" stroke="none" /></Ic> },
  { name: "Diamant", icon: <Ic><path d="M9 1L0 10l9 9v-5l-4-4 4-4z" fill="#1c4396" stroke="none" /><path d="M11 1l9 9-9 9v-5l4-4-4-4z" fill="#163a86" stroke="none" /><path d="M7 10l4-3v6z" fill="#2d62c0" stroke="none" /></Ic> },
  { name: "Chrome", icon: <Ic size={22}><circle cx="10" cy="10" r="9.500" fill="#fbc116" stroke="none" /><path d="M10 10L1.800 5.200A9.500 9.500 0 0118.200 5.200H10z" fill="#e33b2e" stroke="none" /><path d="M10 10l-8.200-4.800A9.500 9.500 0 0010 19.500l3.500-7z" fill="#2da94f" stroke="none" /><circle cx="10" cy="10" r="4.600" fill="#fff" stroke="none" /><circle cx="10" cy="10" r="3.600" fill="#2f7de8" stroke="none" /></Ic> },
  { name: "Acrobat", icon: <Ic><rect x="1" y="0" width="18" height="20" rx="3" fill="#b30b00" stroke="none" /><path d="M5 15c3-1 6-6 5-10 0 5 2 7 6 7-4-1-8 0-11 3z" stroke="#fff" /></Ic> },
  { name: "ProRealTime", active: true, icon: <CandleIcon size={22} /> },
];

function Taskbar() {
  return (
    <footer className="flex h-[34px] shrink-0 items-stretch bg-[#101010] font-['Open_Sans','Noto_Sans',sans-serif] text-white">
      <button type="button" aria-label="Démarrer" className="flex w-[43px] items-center justify-center"><Ic size={15}><path d="M0 3l9-1.500V9.500H0zM10 1.300L20 0v9.500H10zM0 10.500h9v8L0 17zM10 10.500h10V20l-10-1.500z" fill="#fff" stroke="none" /></Ic></button>
      <label className="flex w-[271px] items-center gap-[10px] bg-[#f2f2f2] pl-[11px] text-[#333]">
        <Search size={17} strokeWidth={1.5} className="-scale-x-100" />
        <input type="search" aria-label="Rechercher" placeholder="Taper ici pour rechercher" className="min-w-0 flex-1 text-[13px] outline-none placeholder:text-[#444]" />
      </label>
      {APPS.map((a) => (
        <button key={a.name} type="button" aria-label={a.name} className={a.active ? "flex w-[46px] items-center justify-center bg-[#2d2d2d]" : "flex w-[46px] items-center justify-center"}>{a.icon}</button>
      ))}
      <div className="flex-1" />
      <button type="button" className="flex items-center gap-2 pr-6 text-[12px] whitespace-nowrap">
        <Ic size={24}><path d="M3 13a4 4 0 011-7 5 5 0 019 0 4 4 0 012 7z" fill="#a9c8f5" stroke="none" /><path d="M13 10c4 4 3 8 0 8s-3-4 0-8z" fill="#2f80e8" stroke="none" /><circle cx="15" cy="5" r="4.500" fill="#d0342c" stroke="none" /><path d="M14 4l1.200-1v4.500" stroke="#fff" strokeWidth="1" /></Ic>
        <span>14°C</span><span>Pluie fine</span>
      </button>
      <div className="mr-[6px] flex w-[152px] items-center justify-between">
        <ChevronUp size={15} />
        <Ic size={15}><rect x="4" y="6" width="9" height="9" rx="1" stroke="#fff" /><path d="M13 9l4-2v7l-4-2M4 3c3-2 8-2 11 0M4 18c3 2 8 2 11 0" stroke="#fff" /></Ic>
        <span className="flex h-4 w-3 items-center justify-center rounded-full bg-[#0f7ad8]"><Bluetooth size={11} /></span>
        <Cloud size={16} fill="#e6e6e6" color="#e6e6e6" />
        <Ic size={16}><path d="M6 4h13v10H6zM10 17h6M13 14v3M1 2h4v5H1zM3 7v10h6" stroke="#fff" /></Ic>
        <Volume2 size={15} strokeWidth={1.5} />
        <Ic size={17}><path d="M6 2l4 2.500L6 7 2 4.500zM14 2l4 2.500L14 7l-4-2.500zM14 8l4 2.500-4 2.500-4-2.500z" fill="#fff" stroke="none" /><circle cx="6" cy="14" r="5" fill="#d7192d" stroke="none" /><path d="M4.500 12.500c1-1.500 3-.5 2.500 1L4.500 16h3" stroke="#fff" strokeWidth="1" /></Ic>
      </div>
      <div className="flex w-[58px] flex-col items-center justify-center text-[10px] leading-[16px]"><span>16:45</span><span>21/11/2024</span></div>
      <button type="button" aria-label="Notifications" className="flex w-[46px] items-center justify-center"><MessageSquareText size={19} fill="#fff" stroke="#101010" /></button>
      <div className="w-2" />
    </footer>
  );
}

export default function App() {
  return (
    <main className="flex h-screen min-h-[700px] w-full flex-col overflow-hidden bg-white font-['Liberation_Sans',Arial,sans-serif] text-[10px] leading-[14px] text-[#161616]">
      <MenuBar />
      <DrawingBar />
      <InstrumentBar />
      <TradingPanel />
      <div className="flex min-h-0 flex-1">
        <div className="flex min-w-0 flex-1 flex-col">
          <Indicators />
          <div className="relative min-h-0 flex-1">
            <PriceChart />
            <span className="absolute top-0 left-0 h-4 w-[168px] border-r border-b border-[#7f97a2] bg-white pl-[2px] whitespace-nowrap">Jour :+Haut 20 815,8 +Bas 20 425,0</span>
            <span className="absolute top-[77px] right-1">9/15h 20 786,0</span>
            <span className="absolute top-[278px] right-1">Clo 22h 20 667,1</span>
            <OrderList />
          </div>
        </div>
        <PriceAxis />
      </div>
      <div className="h-4 shrink-0 bg-white pr-[62px]">
        <svg className="block h-4 w-full border-t border-[#7e98a3]" aria-label="Heure">
          {TIME_TICKS.map(([x, t, bold], i) => (
            <g key={i}>
              <path d={`M${x + 0.5} 0v3`} stroke="#7e98a3" />
              <text x={x} y="12" textAnchor="middle" fontSize={bold ? 11 : 10} fontWeight={bold ? 700 : 400} fill="#222">{t}</text>
            </g>
          ))}
        </svg>
      </div>
      <ScrollRow />
      <Taskbar />
    </main>
  );
}
